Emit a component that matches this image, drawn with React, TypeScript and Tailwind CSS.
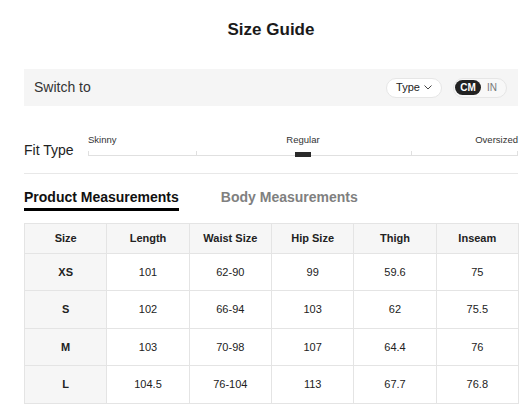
import React from "react";

const COLUMNS = ["Size", "Length", "Waist Size", "Hip Size", "Thigh", "Inseam"];

const ROWS = [
  { size: "XS", values: ["101", "62-90", "99", "59.6", "75"], h: "h-[37px]" },
  { size: "S", values: ["102", "66-94", "103", "62", "75.5"], h: "h-[38px]" },
  { size: "M", values: ["103", "70-98", "107", "64.4", "76"], h: "h-[37px]" },
  { size: "L", values: ["104.5", "76-104", "113", "67.7", "76.8"], h: "h-[38px]" },
];

function FitSlider() {
  return (
    <div className="flex-1">
      <div className="grid grid-cols-3 text-[9.5px] leading-[12px] text-[#333]">
        <span className="text-left">Skinny</span>
        <span className="text-center">Regular</span>
        <span className="text-right">Oversized</span>
      </div>
      <div className="relative mt-[4px] h-[8px]">
        <div className="absolute left-0 right-0 top-[5px] h-px bg-[#e0e0e0]" />
        {/* ticks */}
        <div className="absolute left-0 top-[1px] h-[5px] w-px bg-[#e0e0e0]" />
        <div className="absolute left-1/4 top-[1px] h-[5px] w-px bg-[#e0e0e0]" />
        <div className="absolute left-3/4 top-[1px] h-[5px] w-px bg-[#e0e0e0]" />
        <div className="absolute right-0 top-[1px] h-[5px] w-px bg-[#e0e0e0]" />
        {/* thumb */}
        <div className="absolute left-1/2 top-[2px] h-[5px] w-[16px] -translate-x-1/2 bg-[#2a2a2a]" />
      </div>
    </div>
  );
}

export default function App() {
  return (
    <div className="w-[532px] min-h-[407px] bg-white pl-6 pr-[14px] font-['Liberation_Sans',Arial,sans-serif] text-[#222]">
      <h1 className="pt-[20px] text-center text-[17px] font-bold leading-[20px] text-[#1a1a1a]">
        Size Guide
      </h1>

      {/* Switch bar */}
      <div className="mt-[29px] flex h-[37px] items-center justify-between bg-[#f5f5f5] pl-[10px] pr-[11px]">
        <span className="text-[14px] text-[#333]">Switch to</span>
        <div className="flex items-center gap-[11px]">
          <button className="flex h-[20px] w-[56px] items-center justify-center gap-[4px] rounded-full border border-[#e6e6e6] bg-white text-[11px] text-[#222]">
            Type
            <svg width="8" height="5" viewBox="0 0 8 5" fill="none">
              <path d="M0.5 0.5L4 4L7.5 0.5" stroke="#444" strokeWidth="1" />
            </svg>
          </button>
          <div className="flex h-[20px] w-[54px] items-center rounded-full border border-[#e6e6e6] bg-[#f8f8f8] pl-[1px]">
            <span className="flex h-[15px] w-[26px] items-center justify-center rounded-full bg-[#222] text-[10px] font-bold text-white">
              CM
            </span>
            <span className="ml-[6px] text-[10px] text-[#777]">IN</span>
          </div>
        </div>
      </div>

      {/* Fit type */}
      <div className="mt-[28px] flex items-end">
        <span className="w-16 text-[14px] leading-[16px] text-[#222]">Fit Type</span>
        <FitSlider />
      </div>

      <div className="mt-[15px] h-px bg-[#e8e8e8]" />

      {/* Tabs */}
      <div className="mt-[15px] flex gap-[42px] text-[14px] font-bold leading-[16px]">
        <span className="border-b-[3px] border-black pb-[3px] text-[#111]">Product Measurements</span>
        <span className="text-[#808080]">Body Measurements</span>
      </div>

      {/* Table */}
      <table className="mt-[12px] w-[495px] table-fixed border-collapse text-center text-[11px] text-[#222]">
        <thead>
          <tr className="h-[30px] bg-[#f6f6f6]">
            {COLUMNS.map((c) => (
              <th key={c} className="border border-[#e4e4e4] font-bold">
                {c}
              </th>
            ))}
          </tr>
        </thead>
        <tbody>
          {ROWS.map((r) => (
            <tr key={r.size} className={r.h}>
              <td className="border border-[#e4e4e4] bg-[#f6f6f6] font-bold">{r.size}</td>
              {r.values.map((v, i) => (
                <td key={i} className="border border-[#e4e4e4]">
                  {v}
                </td>
              ))}
            </tr>
          ))}
        </tbody>
      </table>
    </div>
  );
}
